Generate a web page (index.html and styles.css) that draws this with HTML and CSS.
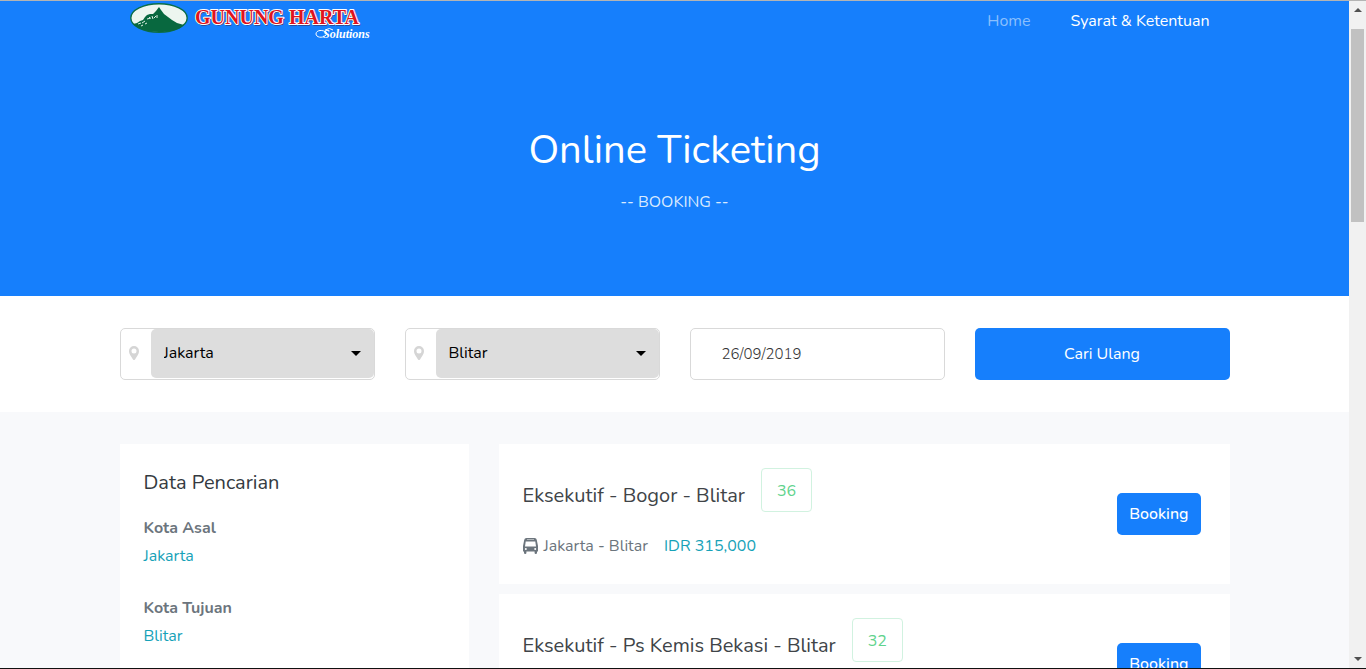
FILE: index.html
```html
<!DOCTYPE html>
<html lang="id">
<head>
<meta charset="utf-8">
<meta name="viewport" content="width=device-width, initial-scale=1">
<title>Online Ticketing - Gunung Harta</title>
<link rel="stylesheet" href="styles.css">
</head>
<body>
<div class="window">
  <div class="page">
    <header class="hero">
      <div class="container navbar">
        <a class="logo" href="#" aria-label="Gunung Harta Solutions">
          <svg width="244" height="40" viewBox="0 0 244 40">
            <ellipse cx="29" cy="17" rx="28.200" ry="14.200" fill="#edf6ef" stroke="#0b6e48" stroke-width="1.400"/>
            <path d="M3 23 7 22 10 20 13 19 15 16 17 14 20 13 23 13 26 10 29 6 31 9 34 13 38 16 42 19 47 22 54 24C49 29 40 31 29 31 17 31 7 28 3 23Z" fill="#08683f"/>
            <path d="M8 23l3-1M12 22l3-2M11 25l2-1M17 18l4-1M19 16l1 1M24 17l2-2M27 14l0 3M22 15l1 3M15 23l2-1" fill="none" stroke="#dff0e4" stroke-width="1"/>
            <text class="logo-shade" x="66" y="24">GUNUNG HARTA</text>
            <text class="logo-name" x="65" y="23">GUNUNG HARTA</text>
            <path d="M197 32c-4-4-11-3-11 1 0 3 6 5 10 1M195 29q5-3 8 0" fill="none" stroke="#fff" stroke-width="1"/>
            <text class="logo-sub" x="193" y="37">Solutions</text>
          </svg>
        </a>
        <nav class="nav">
          <a class="nav-link muted" href="#">Home</a>
          <a class="nav-link" href="#">Syarat &amp; Ketentuan</a>
        </nav>
      </div>
      <div class="hero-text">
        <h1>Online Ticketing</h1>
        <p>-- BOOKING --</p>
      </div>
    </header>

    <form class="search">
      <div class="container search-grid">
        <div class="field">
          <svg class="pin" width="10" height="14" viewBox="0 0 10 14" aria-hidden="true"><path fill-rule="evenodd" d="M5 0a5 5 0 0 1 5 5c0 2-.7 3-1.300 4.300L6 13.400Q5 14.600 4 13.400L1.300 9.300C.7 8 0 7 0 5a5 5 0 0 1 5-5Zm0 2.500a2.500 2.500 0 1 0 0 5 2.500 2.500 0 0 0 0-5Z" fill="#d5d5d5"/></svg>
          <select class="select" aria-label="Kota Asal"><option>Jakarta</option></select>
          <span class="caret"></span>
        </div>
        <div class="field">
          <svg class="pin" width="10" height="14" viewBox="0 0 10 14" aria-hidden="true"><path fill-rule="evenodd" d="M5 0a5 5 0 0 1 5 5c0 2-.7 3-1.300 4.300L6 13.400Q5 14.600 4 13.400L1.300 9.300C.7 8 0 7 0 5a5 5 0 0 1 5-5Zm0 2.500a2.500 2.500 0 1 0 0 5 2.500 2.500 0 0 0 0-5Z" fill="#d5d5d5"/></svg>
          <select class="select" aria-label="Kota Tujuan"><option>Blitar</option></select>
          <span class="caret"></span>
        </div>
        <input class="date" type="text" value="26/09/2019" aria-label="Tanggal">
        <button class="btn" type="submit">Cari Ulang</button>
      </div>
    </form>

    <main class="results">
      <div class="container results-grid">
        <aside class="card summary">
          <h2>Data Pencarian</h2>
          <dl>
            <dt>Kota Asal</dt><dd>Jakarta</dd>
            <dt>Kota Tujuan</dt><dd>Blitar</dd>
          </dl>
        </aside>
        <div class="trips">
          <article class="card trip">
            <div>
              <div class="trip-head"><h3>Eksekutif - Bogor - Blitar</h3><span class="seats">36</span></div>
              <p class="trip-info">
                <svg class="bus" width="15" height="16" viewBox="0 0 15 16" aria-hidden="true"><path d="M3.500 0h8q2 0 2.300 2L15 8v5.500h-1V15q0 1-1.200 1t-1.200-1v-1.500H3.400V15q0 1-1.200 1T1 15v-1.500H0V8l1.200-6Q1.500 0 3.500 0Z" fill="#6c757d"/><path d="M2.700 3.500h9.600L13 8.500H2Z" fill="#fff"/><path d="M4 1.200h7v.8H4Z" fill="#c4c8cb"/><circle cx="2.800" cy="11" r="1" fill="#fff"/><circle cx="12.200" cy="11" r="1" fill="#fff"/></svg>
                <span>Jakarta - Blitar</span><span class="price">IDR 315,000</span>
              </p>
            </div>
            <button class="btn book" type="button">Booking</button>
          </article>
          <article class="card trip">
            <div>
              <div class="trip-head"><h3>Eksekutif - Ps Kemis Bekasi - Blitar</h3><span class="seats">32</span></div>
            </div>
            <button class="btn book" type="button">Booking</button>
          </article>
        </div>
      </div>
    </main>
  </div>
  <div class="scrollbar" aria-hidden="true">
    <span class="arrow up"></span>
    <span class="thumb"></span>
    <span class="arrow down"></span>
  </div>
</div>
</body>
</html>
```
FILE: styles.css
```css
* { box-sizing: border-box; }
body {
  margin: 0;
  font-family: Nunito, Lato, sans-serif;
  font-size: 16px;
  font-weight: 400;
  line-height: 28px;
  color: #6c757d;
}
h1, h2, h3, p, dl, dd { margin: 0; font-weight: inherit; }
a { color: inherit; text-decoration: none; }
button, input, select { font: inherit; }

.window {
  display: flex;
  height: 100vh;
  overflow: hidden;
  border-top: 1px solid #b4b4b4;
  border-bottom: 1px solid #111;
}
.page { flex: 1; min-width: 0; overflow: hidden; background: #f8f9fb; }
.container { width: 100%; max-width: 1110px; margin: 0 auto; }

.hero { background: #167ffc; color: #fff; padding-bottom: 80px; }
.navbar { display: flex; justify-content: space-between; align-items: flex-start; padding-left: 10px; }
.logo { display: flex; }
.logo-name, .logo-shade { font: bold 20px "Liberation Serif", serif; paint-order: stroke; stroke-linejoin: round; }
.logo-name { fill: #e0141e; stroke: #fff; stroke-width: 2px; }
.logo-shade { fill: #3a2b50; stroke: #3a2b50; stroke-width: 1px; }
.logo-sub { font: italic bold 12px "Liberation Serif", serif; fill: #fff; }
.nav { display: flex; padding-top: 6px; }
.nav-link { padding: 0 20px; }
.nav-link.muted { color: #8bbffd; }
.hero-text { text-align: center; padding-top: 85px; }
.hero-text h1 { font-size: 40px; line-height: 48px; }
.hero-text p { margin-top: 14px; color: #d9eaff; }

.search { background: #fff; padding: 32px 0; }
.search-grid { display: grid; grid-template-columns: repeat(4, 1fr); gap: 30px; }
.field, .date { height: 52px; border: 1px solid #d9d9d9; border-radius: 5px; background: #fff; }
.field { position: relative; display: flex; align-items: flex-start; }
.pin { flex: none; margin: 17px 12px 0 8px; }
.select {
  flex: 1;
  min-width: 0;
  height: 49px;
  padding: 0 13px 2px;
  border: 0;
  border-radius: 5px;
  appearance: none;
  background: #ddd;
  color: #000;
}
.caret {
  position: absolute;
  right: 13px;
  top: 22px;
  border: 5px solid transparent;
  border-top-color: #000;
  border-bottom: 0;
  pointer-events: none;
}
.date { width: 100%; padding: 0 31px; font-size: 15px; font-weight: 300; color: #333; }
.btn { border: 0; border-radius: 5px; background: #167ffc; color: #fff; }

.results { padding-top: 32px; }
.results-grid { display: grid; grid-template-columns: 349px 1fr; gap: 30px; }
.card { background: #fff; padding: 24px; }
.summary { min-height: 400px; }
.summary h2 { font-size: 20px; line-height: 30px; color: #343a40; }
.summary dt { margin-top: 24px; font-weight: 700; }
.summary dt:first-child { margin-top: 16px; }
.summary dd { color: #17a2b8; }
.trips { display: flex; flex-direction: column; gap: 10px; }
.trip { display: flex; justify-content: space-between; align-items: center; min-height: 140px; padding-right: 29px; }
.trip > div { align-self: flex-start; }
.trip-head { display: flex; align-items: flex-end; gap: 16px; }
.trip-head h3 { font-size: 20px; line-height: 32px; color: #404448; }
.seats { border: 1px solid #d1f2e0; border-radius: 4px; padding: 8px 15px 6px; color: #5fd38d; }
.trip-info { display: flex; align-items: center; margin-top: 20px; }
.bus { margin-right: 6px; }
.price { margin-left: 16px; color: #17a2b8; }
.book { height: 42px; padding: 0 12px; font-weight: 500; }

.scrollbar { flex: none; width: 17px; display: flex; flex-direction: column; align-items: center; background: #f1f1f1; }
.arrow { border: 4px solid transparent; }
.up { margin: 7px 0 9px; border-top: 0; border-bottom-color: #505050; }
.down { margin: auto 0 7px; border-bottom: 0; border-top-color: #505050; }
.thumb { width: 13px; height: 29%; margin-top: 8px; background: #c1c1c1; }
```
